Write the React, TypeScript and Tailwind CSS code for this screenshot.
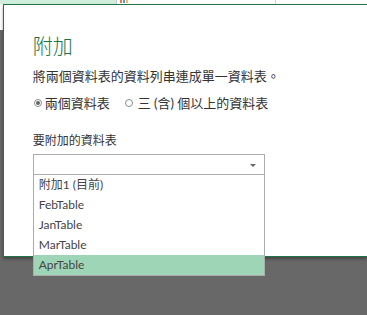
const font = "font-['Lato','Noto_Sans_CJK_TC',sans-serif]";

const tables = ['附加1 (目前)', 'FebTable', 'JanTable', 'MarTable', 'AprTable'];

function Radio({ checked }: { checked?: boolean }) {
  return (
    <span className="flex h-[8px] w-[8px] items-center justify-center rounded-full border border-[#8c8c8c] bg-white">
      {checked && <span className="h-[4px] w-[4px] rounded-full bg-[#666]" />}
    </span>
  );
}

export default function App() {
  return (
    <div className={`relative h-[315px] w-[367px] overflow-hidden bg-[#686868] ${font}`}>
      {/* sheet behind the dialog */}
      <div className="flex h-[4px] bg-white">
        <div className="w-[116px] bg-[#cfeedd]" />
        <div className="w-px bg-[#c6c6c6]" />
        <div className="ml-[3px] flex h-[3px] gap-[1px]">
          <span className="w-[2px] bg-[#e07a5f]" />
          <span className="w-[2px] bg-[#6d8fc9]" />
          <span className="w-[2px] bg-[#e8c35a]" />
        </div>
        <div className="ml-[147px] w-px bg-[#d4d4d4]" />
      </div>

      <div className="flex">
        <div className="flex w-[3px] flex-col">
          <div className="h-[26px] bg-white" />
        </div>

        {/* dialog */}
        <div className="h-[253px] w-[400px] border-y border-l border-[#217346] bg-white pl-[29px] pt-[29px] shadow-[0_2px_3px_rgba(0,0,0,0.35)]">
          <h1 className="text-[20px] leading-[24px] font-light text-[#217346]">附加</h1>
          <p className="mt-[9px] text-[13px] leading-[18px] text-[#333]">
            將兩個資料表的資料列串連成單一資料表。
          </p>

          <div className="mt-[9px] flex items-center text-[13px] leading-[18px] text-[#333]">
            <span className="ml-[1px]">
              <Radio checked />
            </span>
            <span className="ml-[3px]">兩個資料表</span>
            <span className="ml-[15px]">
              <Radio />
            </span>
            <span className="ml-[5px]">三 (含) 個以上的資料表</span>
          </div>

          <div className="mt-[20px] text-[12px] leading-[18px] text-[#333]">要附加的資料表</div>

          <div className="relative mt-[4px] w-[232px]">
            <div className="flex h-[21px] items-center justify-end border border-[#ababab] bg-white pr-[8px]">
              <span className="mt-[2px] h-0 w-0 border-x-[3px] border-t-[3px] border-x-transparent border-t-[#666]" />
            </div>

            <ul className="absolute left-0 top-[20px] w-[232px] border border-[#ababab] bg-white">
              {tables.map((t) => (
                <li
                  key={t}
                  className={`h-[20px] pl-[5px] text-[12px] leading-[20px] text-[#444] ${
                    t === 'AprTable' ? 'bg-[#9fd5b7]' : ''
                  }`}
                >
                  {t}
                </li>
              ))}
            </ul>
          </div>
        </div>
      </div>
    </div>
  );
}
